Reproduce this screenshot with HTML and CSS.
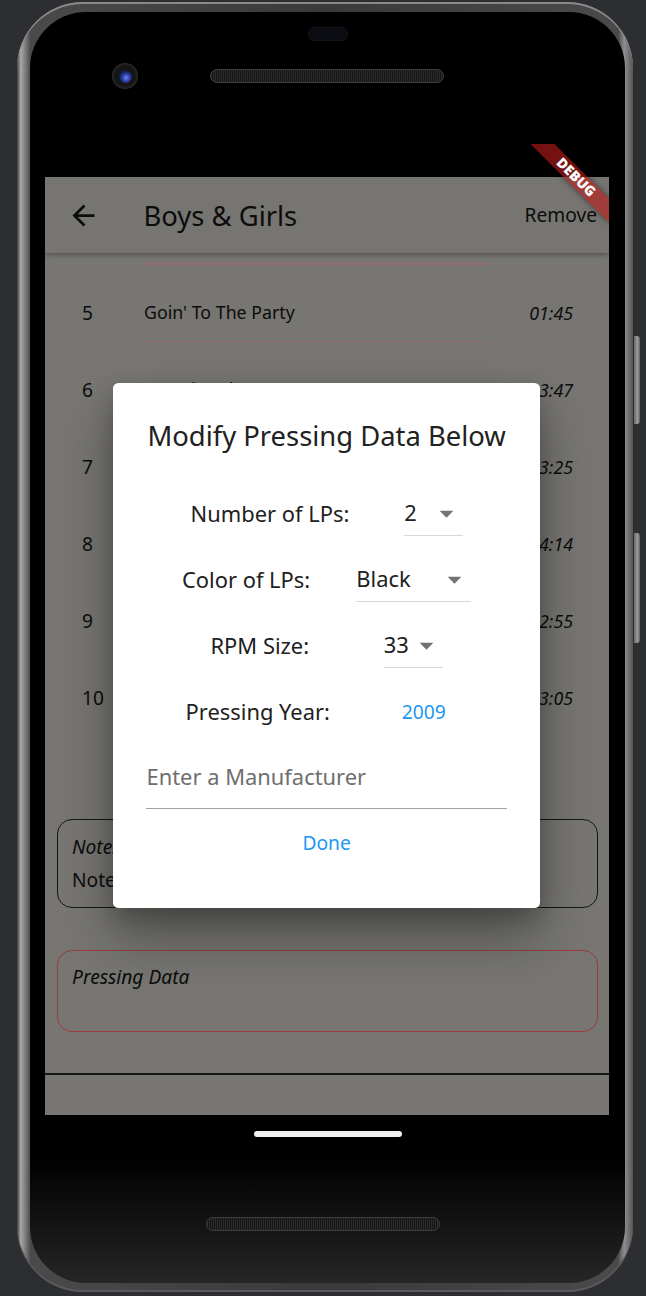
FILE: index.html
```html
<!DOCTYPE html>
<html lang="en">
<head>
<meta charset="utf-8">
<title>Boys &amp; Girls</title>
<link rel="stylesheet" href="styles.css">
</head>
<body>
<div class="stage">
  <div class="phone">
    <div class="bezel">
      <div class="top-hw">
        <div class="earpiece"></div>
        <div class="hw-row">
          <div class="camera"><div class="lens"></div></div>
          <div class="speaker"></div>
        </div>
      </div>

      <div class="window">
        <div class="statusbar"></div>
        <div class="screen">
          <header class="appbar">
            <div class="leading">
              <svg class="icon-back" viewBox="0 0 24 24"><path d="M20 11H7.83l5.59-5.59L12 4l-8 8 8 8 1.41-1.41L7.83 13H20v-2z"/></svg>
            </div>
            <h1 class="title">Boys &amp; Girls</h1>
            <span class="action">Remove</span>
          </header>

          <div class="content">
            <div class="tracks">
              <div class="lead-divider"></div>
              <div class="track"><span class="t-num">5</span><div class="t-main"><span class="t-title">Goin' To The Party</span></div><span class="t-dur">01:45</span></div>
              <div class="track"><span class="t-num">6</span><div class="t-main"><span class="t-title">Heartbreaker</span></div><span class="t-dur">03:47</span></div>
              <div class="track"><span class="t-num">7</span><div class="t-main"><span class="t-title">Hi Plains Drifter</span></div><span class="t-dur">03:25</span></div>
              <div class="track"><span class="t-num">8</span><div class="t-main"><span class="t-title">Knock Knock</span></div><span class="t-dur">04:14</span></div>
              <div class="track"><span class="t-num">9</span><div class="t-main"><span class="t-title">Saturday Night</span></div><span class="t-dur">02:55</span></div>
              <div class="track"><span class="t-num">10</span><div class="t-main"><span class="t-title">Fin</span></div><span class="t-dur">03:05</span></div>
            </div>

            <div class="box notes">
              <div class="box-label">Notes</div>
              <div class="box-text">Notes about this record</div>
            </div>

            <div class="box pressing">
              <div class="box-label">Pressing Data</div>
            </div>

            <div class="bottom-line"></div>
          </div>

          <div class="dialog">
            <h2 class="dlg-title">Modify Pressing Data Below</h2>

            <div class="field-row">
              <span class="label">Number of LPs:</span>
              <div class="dropdown"><span class="dd-value dd-num">2</span><svg class="dd-arrow" viewBox="0 0 24 24"><path d="M7 10l5 5 5-5z"/></svg></div>
            </div>
            <div class="field-row">
              <span class="label">Color of LPs:</span>
              <div class="dropdown"><span class="dd-value dd-color">Black</span><svg class="dd-arrow" viewBox="0 0 24 24"><path d="M7 10l5 5 5-5z"/></svg></div>
            </div>
            <div class="field-row">
              <span class="label">RPM Size:</span>
              <div class="dropdown"><span class="dd-value dd-rpm">33</span><svg class="dd-arrow" viewBox="0 0 24 24"><path d="M7 10l5 5 5-5z"/></svg></div>
            </div>
            <div class="field-row">
              <span class="label">Pressing Year:</span>
              <button class="text-btn">2009</button>
            </div>

            <div class="textfield"><span class="placeholder">Enter a Manufacturer</span></div>

            <div class="actions"><button class="text-btn">Done</button></div>
          </div>
        </div>
        <div class="debug-banner">DEBUG</div>
      </div>

      <div class="bottom-hw">
        <div class="home-pill"></div>
        <div class="speaker speaker-bottom"></div>
      </div>
    </div>
  </div>
  <div class="side-buttons">
    <div class="side-btn power"></div>
    <div class="side-btn volume"></div>
  </div>
</div>
</body>
</html>
```

FILE: styles.css
```css
* {
  box-sizing: border-box;
  margin: 0;
  padding: 0;
}

html, body {
  width: 646px;
  height: 1296px;
}

body {
  background: #2c2e31;
  overflow: hidden;
  font-family: "Noto Sans", "Open Sans", sans-serif;
}

.stage {
  display: flex;
  padding: 2px 0 0 17px;
}

/* ---------- device frame ---------- */
.phone {
  width: 616px;
  height: 1290px;
  border-radius: 66px;
  padding: 10px 8px 9px 13px;
  background: linear-gradient(90deg, #3c3c3c 0, #a8a8a8 0.6%, #7a7a7a 1.4%, #4a4a4a 2.2%, #3a3a3a 50%, #4a4a4a 97.6%, #8e8e8e 98.6%, #555 100%);
  box-shadow: inset 0 2px 0 #8a8a8a, inset 0 -2px 0 #5a5a5a;
}

.bezel {
  height: 100%;
  border-radius: 56px;
  background: linear-gradient(180deg, #000 0, #000 90%, #121212 95%, #262626 100%);
  display: flex;
  flex-direction: column;
  align-items: center;
}

.top-hw {
  height: 132px;
  width: 100%;
  display: flex;
  flex-direction: column;
  align-items: center;
}

.earpiece {
  margin-top: 15px;
  width: 40px;
  height: 14px;
  border-radius: 7px;
  background: #0b0c12;
  border: 1px solid #15161c;
}

.hw-row {
  margin-top: 22px;
  width: 100%;
  display: flex;
  align-items: center;
  padding-left: 82px;
}

.camera {
  width: 26px;
  height: 26px;
  border-radius: 50%;
  background: radial-gradient(circle, #151515 0 55%, #2a2a2a 70%, #1c1c1c 100%);
  display: flex;
  align-items: center;
  justify-content: center;
}

.lens {
  width: 13px;
  height: 13px;
  border-radius: 50%;
  background: radial-gradient(circle at 55% 60%, #6f8cf0 0, #3048b8 30%, #15205a 60%, #0a0d20 100%);
}

.speaker {
  margin-left: 72px;
  width: 234px;
  height: 14px;
  border-radius: 7px;
  border: 1px solid #3e3e3e;
  background-color: #1c1c1c;
  background-image: repeating-linear-gradient(90deg, #2b2b2b 0 1px, #161616 1px 2px);
}

/* ---------- app window ---------- */
.window {
  position: relative;
  align-self: flex-start;
  margin-left: 15px;
  width: 564px;
  height: 971px;
  overflow: hidden;
  background: #000;
}

.statusbar {
  height: 33px;
  background: #000;
}

.screen {
  position: relative;
  height: 938px;
  background: #777672;
  color: #0c0c0c;
}

.appbar {
  position: relative;
  z-index: 1;
  height: 76px;
  display: flex;
  align-items: center;
  background: #767571;
  box-shadow: 0 2px 5px rgba(0, 0, 0, 0.3);
}

.leading {
  width: 77px;
  height: 76px;
  display: flex;
  align-items: center;
  justify-content: center;
}

.icon-back {
  width: 33px;
  height: 33px;
  fill: #0c0c0c;
}

.title {
  flex: 1;
  margin-left: 21.5px;
  font-size: 27.4px;
  font-weight: 400;
  line-height: 37px;
}

.action {
  padding-right: 12px;
  font-size: 19.2px;
  line-height: 26px;
}

/* ---------- track list ---------- */
.tracks {
  padding-top: 10px;
}

.lead-divider {
  margin-left: 99px;
  width: 346px;
  height: 1.5px;
  background: #926f6d;
}

.track {
  display: flex;
  align-items: flex-start;
  height: 77px;
  padding-top: 35.5px;
}

.t-num {
  width: 99px;
  padding-left: 37px;
  font-size: 19.2px;
  line-height: 26px;
}

.t-main {
  width: 346px;
  height: 41.5px;
  border-bottom: 1.5px solid #926f6d;
}

.t-title {
  font-size: 17.8px;
  line-height: 24px;
}

.t-dur {
  flex: 1;
  text-align: right;
  padding-right: 36px;
  font-size: 17.8px;
  font-style: italic;
  line-height: 26px;
}

/* ---------- boxes ---------- */
.box {
  margin-left: 12px;
  margin-right: 11px;
  border-radius: 15px;
  padding: 13.5px 14px;
}

.notes {
  margin-top: 92.5px;
  height: 88.5px;
  border: 1.5px solid #151515;
}

.pressing {
  margin-top: 42px;
  height: 82.3px;
  border: 1.5px solid #9a3c3b;
}

.box-label {
  font-size: 19.2px;
  font-style: italic;
  line-height: 26px;
}

.box-text {
  margin-top: 7px;
  font-size: 19.2px;
  line-height: 26px;
}

.bottom-line {
  margin-top: 41px;
  height: 2px;
  background: #161616;
}

/* ---------- dialog ---------- */
.dialog {
  position: absolute;
  z-index: 2;
  left: 68.3px;
  top: 206.3px;
  width: 426.7px;
  background: #fff;
  border-radius: 5.5px;
  padding: 33.5px 22.5px 40.8px;
  color: #212121;
  box-shadow: 0 30px 55px rgba(0, 0, 0, 0.32), 0 10px 22px rgba(0, 0, 0, 0.2);
}

.dlg-title {
  font-size: 27.4px;
  font-weight: 400;
  line-height: 37px;
  text-align: center;
  margin-bottom: 27.2px;
}

.field-row {
  height: 66px;
  display: flex;
  align-items: center;
  justify-content: space-evenly;
}

.label {
  font-size: 21.9px;
  line-height: 30px;
}

.dropdown {
  height: 44px;
  display: flex;
  align-items: center;
  border-bottom: 1.3px solid #d8d8d8;
}

.dd-value {
  font-size: 21.9px;
  line-height: 30px;
}

.dd-num { width: 25.5px; }
.dd-color { width: 82px; }
.dd-rpm { width: 26px; }

.dd-arrow {
  width: 33px;
  height: 33px;
  fill: #737373;
}

.text-btn {
  min-width: 88px;
  height: 49px;
  padding: 0 11px;
  border: 0;
  background: none;
  font-family: inherit;
  font-size: 19.2px;
  font-weight: 400;
  color: #2196f3;
}

.textfield {
  margin: 0 10.7px;
  padding: 17px 0 16px;
  border-bottom: 1.3px solid #a2a2a2;
}

.placeholder {
  display: block;
  font-size: 21.9px;
  line-height: 30px;
  color: #6e6e6e;
}

.actions {
  margin-top: 9.2px;
  display: flex;
  justify-content: center;
}

/* ---------- debug banner ---------- */
.debug-banner {
  position: absolute;
  z-index: 5;
  left: 476px;
  top: 24.75px;
  width: 110px;
  height: 16.5px;
  transform: rotate(45deg);
  background: rgba(183, 28, 28, 0.63);
  box-shadow: 0 0 6px rgba(0, 0, 0, 0.5);
  color: #fff;
  font-size: 14px;
  font-weight: 900;
  line-height: 16.5px;
  text-align: center;
}

/* ---------- bottom hardware ---------- */
.bottom-hw {
  width: 100%;
  display: flex;
  flex-direction: column;
  align-items: center;
}

.home-pill {
  margin-top: 16px;
  width: 148px;
  height: 6px;
  border-radius: 3px;
  background: #f2f2f2;
}

.speaker-bottom {
  margin-top: 80px;
  margin-left: 0;
  margin-right: 9px;
}

/* ---------- side buttons ---------- */
.side-buttons {
  display: flex;
  flex-direction: column;
  margin-left: 1px;
}

.side-btn {
  width: 6px;
  border-radius: 0 3px 3px 0;
  background: linear-gradient(90deg, #6a6a6a, #9c9c9c 60%, #5a5a5a);
}

.power {
  margin-top: 334px;
  height: 88px;
}

.volume {
  margin-top: 109px;
  height: 110px;
}
```
